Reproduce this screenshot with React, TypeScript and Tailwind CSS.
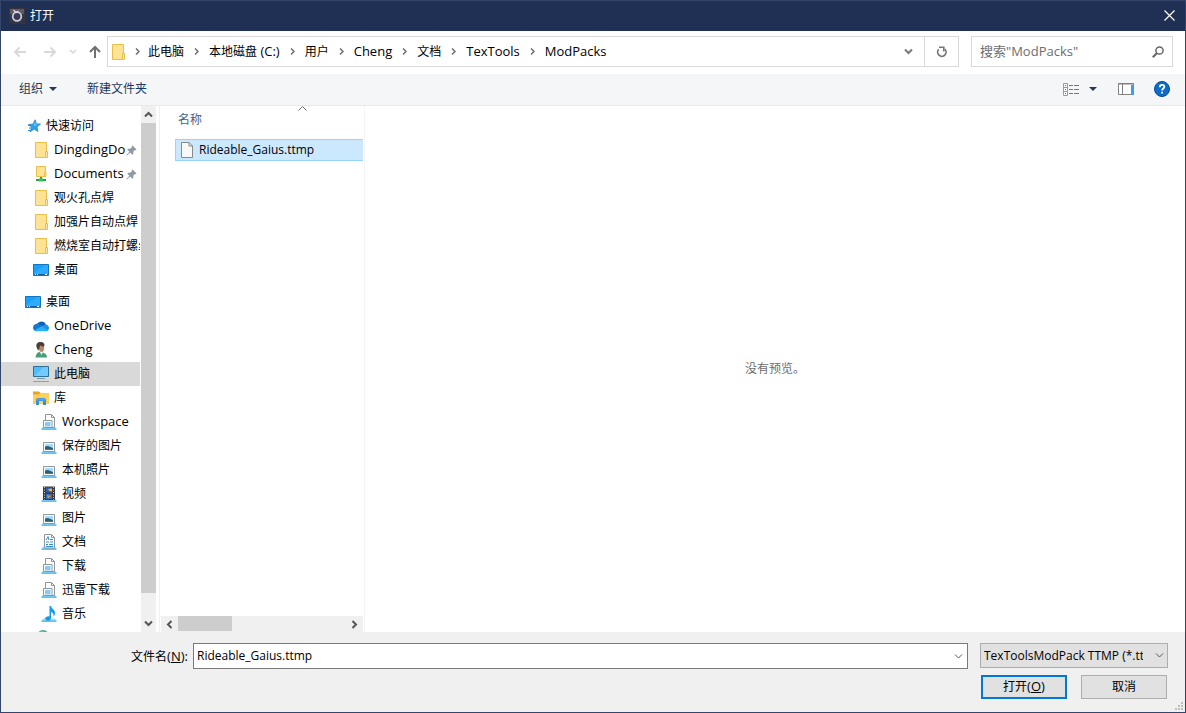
import { Fragment, useState } from 'react'
import type { ReactNode } from 'react'
import clsx from 'clsx'

type IconName =
  | 'star' | 'folder' | 'netFolder' | 'desktop' | 'cloud' | 'user' | 'pc'
  | 'library' | 'libDoc' | 'libPicture' | 'libVideo' | 'libText' | 'libMusic' | 'network'

type NavItem = { label: string; icon: IconName; level: number; pinned?: boolean; active?: boolean }

const quickAccess: NavItem[] = [
  { label: '快速访问', icon: 'star', level: 0 },
  { label: 'DingdingDo', icon: 'folder', level: 1, pinned: true },
  { label: 'Documents', icon: 'netFolder', level: 1, pinned: true },
  { label: '观火孔点焊', icon: 'folder', level: 1 },
  { label: '加强片自动点焊', icon: 'folder', level: 1 },
  { label: '燃烧室自动打螺丝', icon: 'folder', level: 1 },
  { label: '桌面', icon: 'desktop', level: 1 },
]

const desktopTree: NavItem[] = [
  { label: '桌面', icon: 'desktop', level: 0 },
  { label: 'OneDrive', icon: 'cloud', level: 1 },
  { label: 'Cheng', icon: 'user', level: 1 },
  { label: '此电脑', icon: 'pc', level: 1, active: true },
  { label: '库', icon: 'library', level: 1 },
  { label: 'Workspace', icon: 'libDoc', level: 2 },
  { label: '保存的图片', icon: 'libPicture', level: 2 },
  { label: '本机照片', icon: 'libPicture', level: 2 },
  { label: '视频', icon: 'libVideo', level: 2 },
  { label: '图片', icon: 'libPicture', level: 2 },
  { label: '文档', icon: 'libText', level: 2 },
  { label: '下载', icon: 'libDoc', level: 2 },
  { label: '迅雷下载', icon: 'libDoc', level: 2 },
  { label: '音乐', icon: 'libMusic', level: 2 },
  { label: '', icon: 'network', level: 1 },
]

const crumbs: ReactNode[] = [
  '此电脑',
  <>本地磁盘<span className="text-[13px]"> (C:)</span></>,
  '用户',
  <span className="text-[13px]">Cheng</span>,
  '文档',
  <span className="text-[13px]">TexTools</span>,
  <span className="text-[13px]">ModPacks</span>,
]

const indent = ['pl-6', 'pl-8', 'pl-10']

// Tray under every library icon
const Tray = () => (
  <>
    <path d="M2 12.5h12l1.5 2.5H.5z" fill="#a9dcf8" />
    <path d="M.5 14.500h15v1.300H.5z" fill="#3db2ee" />
  </>
)

const icons: Record<IconName, ReactNode> = {
  star: (
    <>
      <path d="M10.200 1.800l1.100 4 4.200.3-3.500 2.700.9 4.700-3.700-2.500-4 2.700 1.500-4.500-3.100-2.700 4.200-.3z" fill="#2aa3ec" stroke="#1278c4" strokeWidth=".7" />
      <path d="M3 7.500h3M4 10h2.500M3 12.500h2.500" stroke="#1e8fdc" strokeWidth="1" />
      <path d="M10 3.500l.8 3 2.700.3-4.500.9z" fill="#7fd0fb" />
    </>
  ),
  folder: (
    <>
      <path d="M2.500.500h11v15h-11z" fill="#ffe394" stroke="#e8bf4a" />
      <path d="M12.500 9.500h2v6h-2z" fill="#ffe9a8" stroke="#e8bf4a" />
    </>
  ),
  netFolder: (
    <>
      <path d="M3.500.500h9v10h-9z" fill="#ffe394" stroke="#e8bf4a" />
      <path d="M11.500 6.500h1.500v4h-1.500z" fill="#ffe9a8" stroke="#e8bf4a" />
      <path d="M7 11h2v2h4v2H3v-2h4z" fill="#27a345" />
      <path d="M6 12.500h4v3H6z" fill="#38c25a" />
    </>
  ),
  desktop: (
    <>
      <path d="M.5 2.500h15v11H.5z" fill="#18a0fb" stroke="#1373bd" />
      <path d="M1 11L12 3h3v9H1z" fill="#3fb3ff" opacity=".6" />
      <path d="M1.500 12.500h13" stroke="#0f62a6" />
      <path d="M2 12.500h1M4 12.500h1M12 12.500h2" stroke="#fff" />
    </>
  ),
  cloud: (
    <>
      <path d="M4 6a5 5 0 0 1 9 .5L8 11z" fill="#0f5fb8" />
      <path d="M3.600 5.800C1.500 6 0 7.600 0 9.600 0 11.800 1.600 13.300 3.600 13.300L10 8.500C8 6.500 6 5.500 3.600 5.800z" fill="#1377d1" />
      <path d="M12.600 6.500c2 0 3.400 1.600 3.400 3.500s-1.500 3.300-3.300 3.300L8 10c1-2.200 2.600-3.500 4.600-3.500z" fill="#1f93e4" />
      <path d="M1.300 12.300L8.600 8.300l6.200 4.100c-.6.6-1.300.9-2.200.9h-9c-1 0-1.700-.4-2.300-1z" fill="#2ab1f2" />
    </>
  ),
  user: (
    <>
      <path d="M2.500 15.500c0-2 1-4.500 3.500-5.500l3 .5c3 .5 5 2 5 5z" fill="#4a9a78" />
      <path d="M6.500 9.500h3l-.5 4z" fill="#eef3f0" />
      <ellipse cx="8.500" cy="6" rx="2.600" ry="4" fill="#b98865" />
      <path d="M3.500 5C2.800 2 4.500 0 7.500 0s4.600 1.700 3.700 4.500C9.500 4.500 8 4 7 3.500 6.700 6 6 7.500 5 8.500z" fill="#4b4038" />
    </>
  ),
  pc: (
    <>
      <path d="M.5.500h15v10H.5z" fill="#4fbcf8" stroke="#2b7199" />
      <path d="M1 10L11 1h4v9z" fill="#8bd6fc" opacity=".6" />
      <path d="M4 12.500h8" stroke="#7d96a6" strokeWidth="1" />
      <path d="M0 15.500h16" stroke="#86a4b8" strokeWidth="1" />
    </>
  ),
  library: (
    <>
      <path d="M0 1.500h6L7.500 3H16v11H0z" fill="#e5a525" />
      <path d="M0 4.500h6l1-1.500h9v11H0z" fill="#ffd058" />
      <path d="M3 15V9.500L4.500 8h7L13 9.500V15h-3v-4H6v4z" fill="#3b8fd8" />
      <path d="M4 8.500h8v2H4z" fill="#4da9f0" />
    </>
  ),
  libDoc: (
    <>
      <Tray />
      <path d="M4.500.500h6l3 3v10h-9z" fill="#fbfbfb" stroke="#8d969c" />
      <path d="M10.500.500v3h3" fill="none" stroke="#8d969c" />
      <path d="M2.500 6.500h8.500v7H2.500z" fill="#fff" stroke="#8d969c" />
      <path d="M4 8h5.500v4.500H4z" fill="#8ac9f5" />
    </>
  ),
  libPicture: (
    <>
      <Tray />
      <path d="M2.500 4.500h11v9h-11z" fill="#fff" stroke="#8d969c" />
      <path d="M4 6h8v6H4z" fill="#a9d9f8" />
      <path d="M4 8.500l3-.5 5 2v1H4z" fill="#2c6172" />
      <path d="M4 11h8v1H4z" fill="#3975b8" />
    </>
  ),
  libVideo: (
    <>
      <Tray />
      <path d="M2 .500h12v13.500H2z" fill="#3b3b3e" />
      <path d="M5 1.500h6v5H5z" fill="#315ea8" />
      <path d="M5 8h6v5H5z" fill="#2e6fc0" />
      <path d="M7 3l4-.5v3L8.500 5z" fill="#f1b53a" />
      <path d="M6 9l4 1-3 2.500z" fill="#e0913a" />
      <path d="M9 8h2v2z" fill="#d5432f" />
      <path d="M3.500 1v13M12.500 1v13" stroke="#c9c9c9" strokeDasharray="1 1.500" />
    </>
  ),
  libText: (
    <>
      <Tray />
      <path d="M3.500.500h7l3 3v10.500h-10z" fill="#fff" stroke="#8d969c" />
      <path d="M10.500.500v3h3" fill="none" stroke="#8d969c" />
      <path d="M5 6l2-3.500L8 6M9 5.500h3M5 8h3M9 8h3M5 10.500h2M8 10.500h4M5 12.500h7" stroke="#2f91d2" fill="none" />
    </>
  ),
  libMusic: (
    <>
      <Tray />
      <path d="M8.500 0H10c.4 2.500 4 3.500 4 7 0 1.500-.6 2.600-1.600 3.500.7-2.500-.6-4-2.400-4.500v6c0 1.700-1.300 2.700-3 2.700s-2.800-.9-2.800-2.200c0-1.500 1.700-2.500 4.300-2.200z" fill="#1a9be6" />
    </>
  ),
  network: (
    <>
      <circle cx="10" cy="6" r="6" fill="#4aa7a2" />
      <path d="M5 4l3-3.500 3 1-3 3z" fill="#57bdf0" />
    </>
  ),
}

const Icon = ({ name }: { name: IconName }) => (
  <svg viewBox="0 0 16 16" className="h-4 w-4 shrink-0" aria-hidden="true">{icons[name]}</svg>
)

const Caret = ({ className }: { className?: string }) => (
  <svg viewBox="0 0 8 4" className={clsx('h-1 w-2', className)} aria-hidden="true">
    <path d="M0 0h8L4 4z" fill="#1e395b" />
  </svg>
)

const chevronPaths = {
  up: 'M1 6.500L4.500 3 8 6.500',
  down: 'M1 2.500L4.500 6 8 2.500',
  left: 'M6.500 1L3 4.500 6.500 8',
  right: 'M2.500 1L6 4.500 2.500 8',
}

const Chevron = ({ dir, color = '#555', width = 2 }: { dir: keyof typeof chevronPaths; color?: string; width?: number }) => (
  <svg viewBox="0 0 9 9" className="h-[9px] w-[9px]" aria-hidden="true">
    <path d={chevronPaths[dir]} fill="none" stroke={color} strokeWidth={width} />
  </svg>
)

const Pin = () => (
  <svg viewBox="0 0 11 11" className="h-[11px] w-[11px] shrink-0" aria-hidden="true">
    <path d="M6.500.5l4 4-.8.8-.8-.2-1.700 1.700.2 2-1 .9-2.300-2.300L1 10.500l-.6-.5 3-3.200L1.300 4.600l.9-.9 2 .1L6 2.100l-.2-.8z" fill="#8d9aa6" />
  </svg>
)

const NavRow = ({ item }: { item: NavItem }) => (
  <li>
    <a
      href="#"
      className={clsx(
        'flex h-6 items-center whitespace-nowrap',
        indent[item.level],
        /[a-z]/i.test(item.label) ? 'text-[13px]' : 'text-xs',
        item.active ? 'bg-[#d9d9d9]' : 'hover:bg-[#e5f3ff]'
      )}
    >
      <Icon name={item.icon} />
      <span className="ml-[5px] w-[72px] flex-none">{item.label}</span>
      {item.pinned && <Pin />}
    </a>
  </li>
)

export default function App() {
  const [fileName, setFileName] = useState('Rideable_Gaius.ttmp')

  return (
    <div className="flex h-screen flex-col overflow-hidden border border-[#34456c] bg-white font-['Open_Sans','Noto_Sans_CJK_SC',sans-serif] text-xs text-black">
      {/* Title bar */}
      <header className="flex h-[30px] shrink-0 items-center bg-[#1f3054] pl-2">
        <svg viewBox="0 0 16 16" className="h-4 w-4" aria-hidden="true">
          <rect width="16" height="16" rx="1.500" fill="#37353a" />
          <path d="M1 1h14v5H1z" fill="#5d5a5c" />
          <circle cx="8" cy="8.500" r="4.300" fill="#3c3a4c" stroke="#c3cbf0" strokeWidth="1.800" />
          <path d="M4.500 2l2.500 2.500L9.500 3" stroke="#e9d9e0" strokeWidth="1.200" fill="none" />
        </svg>
        <h1 className="ml-[5px] flex-1 text-white">打开</h1>
        <button aria-label="关闭" className="flex h-full w-8 items-center justify-center pb-px">
          <svg viewBox="0 0 11 11" className="h-[11px] w-[11px]" aria-hidden="true">
            <path d="M.5.5l10 10M10.500.5l-10 10" stroke="#fff" strokeWidth="1.200" />
          </svg>
        </button>
      </header>

      {/* Address row */}
      <div className="flex h-[43px] shrink-0 items-center pb-0.5 pr-3">
        <div className="flex w-[106px] shrink-0 items-center pl-3">
          <button aria-label="后退" className="w-[30px]">
            <svg viewBox="0 0 14 12" className="h-3 w-[14px]" aria-hidden="true">
              <path d="M13 6H2M6.500 1.500L2 6l4.500 4.500" fill="none" stroke="#d9d9d9" strokeWidth="2" />
            </svg>
          </button>
          <button aria-label="前进" className="w-[26px]">
            <svg viewBox="0 0 14 12" className="h-3 w-[14px]" aria-hidden="true">
              <path d="M1 6h11M7.500 1.500L12 6l-4.500 4.500" fill="none" stroke="#d9d9d9" strokeWidth="2" />
            </svg>
          </button>
          <button aria-label="最近浏览的位置" className="flex w-5">
            <svg viewBox="0 0 8 6" className="h-[6px] w-2" aria-hidden="true">
              <path d="M1 1l3 3 3-3" fill="none" stroke="#d4d4d4" strokeWidth="1.500" />
            </svg>
          </button>
          <button aria-label="上移">
            <svg viewBox="0 0 12 14" className="h-[14px] w-3" aria-hidden="true">
              <path d="M6 13V2M1 7l5-5 5 5" fill="none" stroke="#707070" strokeWidth="2" />
            </svg>
          </button>
        </div>

        <div className="flex h-[31px] min-w-0 flex-1 border border-[#d9d9d9]">
          <nav className="flex min-w-0 flex-1 items-center overflow-hidden whitespace-nowrap pl-0.5">
            <Icon name="folder" />
            {crumbs.map((crumb, i) => (
              <Fragment key={i}>
                <span className={clsx('flex shrink-0 justify-center', i === 0 ? 'w-[22px]' : 'w-[25px]')}>
                  <svg viewBox="0 0 5 7" className="h-[7px] w-[5px]" aria-hidden="true">
                    <path d="M1 .5l3 3-3 3" fill="none" stroke="#6e6e6e" strokeWidth="1.500" />
                  </svg>
                </span>
                <a href="#" className="whitespace-pre leading-5">{crumb}</a>
              </Fragment>
            ))}
          </nav>
          <button aria-label="以前的位置" className="flex w-8 items-center justify-center">
            <Chevron dir="down" color="#777" />
          </button>
          <button aria-label="刷新" className="flex w-[34px] items-center justify-center border-l border-[#d9d9d9]">
            <svg viewBox="0 0 12 12" className="h-3 w-3" aria-hidden="true">
              <path d="M2.700 3.300A4.200 4.200 0 1 0 8.700 3" fill="none" stroke="#777" strokeWidth="1.700" />
              <path d="M3 1.200h4.800V5.500" fill="none" stroke="#777" strokeWidth="1.600" />
            </svg>
          </button>
        </div>

        <label className="ml-3 flex h-[31px] w-[202px] shrink-0 items-center border border-[#d9d9d9] pl-2 pr-2">
          <input
            type="text"
            aria-label={'搜索"ModPacks"'}
            placeholder={'搜索"ModPacks"'}
            className="min-w-0 flex-1 text-[13px] outline-none placeholder:text-[#6d6d6d]"
          />
          <svg viewBox="0 0 12 12" className="h-3 w-3" aria-hidden="true">
            <circle cx="7.500" cy="4.500" r="3.600" fill="none" stroke="#666" strokeWidth="1.500" />
            <path d="M5 7L.8 11.200" stroke="#666" strokeWidth="2" />
          </svg>
        </label>
      </div>

      {/* Command bar */}
      <div className="flex h-8 shrink-0 items-center border-b border-[#e8e9ea] bg-[#f5f6f7] pb-px pl-[18px] pr-[15px] text-[#1e395b]">
        <button className="flex items-center">
          组织
          <Caret className="ml-1.5" />
        </button>
        <button className="ml-[30px]">新建文件夹</button>
        <button aria-label="更改视图" className="ml-auto flex items-center">
          <svg viewBox="0 0 16 13" className="h-[13px] w-4" aria-hidden="true">
            <path d="M.5.500h4v12h-4zM.5 4.500h4M.5 8.500h4" fill="#fff" stroke="#9b9b9b" />
            <path d="M2 2.500h1M2 6.500h1" stroke="#2f78c4" />
            <path d="M2 10.500h1" stroke="#d0342c" />
            <path d="M6 2.500h4M11 2.500h5M6 6.500h4M11 6.500h5M6 10.500h4M11 10.500h5" stroke="#777" />
          </svg>
          <Caret className="ml-2.5" />
        </button>
        <button aria-label="预览窗格" className="ml-[21px]">
          <svg viewBox="0 0 16 12" className="h-3 w-4" aria-hidden="true">
            <path d="M.5.500h15v11H.5z" fill="#fff" stroke="#808080" />
            <path d="M0 1h16M4.500 1v10" stroke="#808080" />
            <path d="M13 2h3v10h-3z" fill="#3e9be9" />
          </svg>
        </button>
        <button aria-label="获取帮助" className="ml-5">
          <svg viewBox="0 0 16 16" className="h-4 w-4" aria-hidden="true">
            <circle cx="8" cy="8" r="7.500" fill="#0b6ccc" stroke="#0a4a92" />
            <path d="M5.800 6.200c0-1.500 1-2.300 2.300-2.300s2.200.8 2.200 2c0 1.500-2.200 1.700-2.200 3.600" fill="none" stroke="#fff" strokeWidth="1.800" />
            <path d="M7.200 10.800H9v1.800H7.200z" fill="#fff" />
          </svg>
        </button>
      </div>

      {/* Tree, file list and preview */}
      <main className="flex min-h-0 flex-1">
        <aside className="flex w-[159px] shrink-0 border-r border-[#f0f0f0]">
          <nav className="w-[139px] overflow-hidden pt-2">
            <ul>{quickAccess.map((item, i) => <NavRow key={i} item={item} />)}</ul>
            <ul className="mt-2">{desktopTree.map((item, i) => <NavRow key={i} item={item} />)}</ul>
          </nav>
          <div className="ml-px flex w-[15px] flex-col bg-[#f0f0f0]">
            <button aria-label="向上滚动" className="flex h-[17px] items-center justify-center"><Chevron dir="up" /></button>
            <div className="grow-[470] bg-[#cdcdcd]" />
            <div className="grow-[22]" />
            <button aria-label="向下滚动" className="flex h-[17px] items-center justify-center"><Chevron dir="down" /></button>
          </div>
        </aside>

        <section className="flex w-[205px] shrink-0 flex-col border-r border-[#f5f5f5] pl-px">
          <button className="relative h-[33px] pl-[17px] pb-1.5 text-left text-[#4c607a]">
            名称
            <svg viewBox="0 0 9 5" className="absolute left-[137px] top-0 h-[5px] w-[9px]" aria-hidden="true">
              <path d="M.5 4.500l4-4 4 4" fill="none" stroke="#666" />
            </svg>
          </button>
          <ul className="min-h-0 flex-1 pl-3.5">
            <li className="mr-px flex h-[22px] items-center border border-r-0 border-[#99d1ff] bg-[#cce8ff] pl-[5px]">
              <svg viewBox="0 0 12 16" className="h-4 w-3" aria-hidden="true">
                <path d="M.5.500h7.500l3.500 3.500v11.500H.5z" fill="#f8f8f8" stroke="#8a8a8a" />
                <path d="M8 .500v3.500h3.500" fill="none" stroke="#8a8a8a" />
              </svg>
              <span className="ml-1.5">Rideable_Gaius.ttmp</span>
            </li>
          </ul>
          <div className="mr-px flex h-4 bg-[#f0f0f0]">
            <button aria-label="向左滚动" className="flex w-[17px] items-center justify-center"><Chevron dir="left" /></button>
            <div className="mb-px w-[54px] bg-[#cdcdcd]" />
            <div className="flex-1" />
            <button aria-label="向右滚动" className="flex w-[17px] items-center justify-center"><Chevron dir="right" /></button>
          </div>
        </section>

        <section className="flex flex-1 items-center justify-center text-[#6d6d6d]">
          没有预览。
        </section>
      </main>

      {/* File name and buttons */}
      <footer className="relative flex h-20 shrink-0 flex-col bg-[#f0f0f0] pr-[17px] pt-[11px]">
        <div className="flex items-start">
          <label htmlFor="file-name" className="w-48 pr-[5px] text-right leading-[26px]">
            文件名<span className="text-[13px]">(<u>N</u>):</span>
          </label>
          <div className="flex h-[26px] min-w-0 flex-1 border border-[#7a7a7a] bg-white">
            <input
              id="file-name"
              type="text"
              value={fileName}
              onChange={(e) => setFileName(e.target.value)}
              className="min-w-0 flex-1 pl-[3px] outline-none"
            />
            <button aria-label="文件名列表" className="flex w-[17px] items-center justify-center">
              <Chevron dir="down" width={1} />
            </button>
          </div>
          <div className="relative ml-3 w-[188px] shrink-0">
            <select
              aria-label="文件类型"
              className="h-[25px] w-full appearance-none border border-[#adadad] bg-[#e1e1e1] pl-[3px] pr-6 outline-none"
            >
              <option>TexToolsModPack TTMP (*.ttmp)</option>
            </select>
            <span className="pointer-events-none absolute right-1 top-2">
              <Chevron dir="down" width={1} />
            </span>
          </div>
        </div>
        <div className="mt-[5px] flex justify-end gap-3.5 pr-px">
          <button className="h-6 w-[86px] border-2 border-[#0078d7] bg-[#e1e1e1]">
            打开<span className="text-[13px]">(<u>O</u>)</span>
          </button>
          <button className="h-6 w-[86px] border border-[#adadad] bg-[#e1e1e1]">取消</button>
        </div>
        <svg viewBox="0 0 8 8" className="absolute bottom-0.5 right-0.5 h-2 w-2" aria-hidden="true">
          <path d="M6 0h2v2H6zM3 3h2v2H3zM6 3h2v2H6zM0 6h2v2H0zM3 6h2v2H3zM6 6h2v2H6z" fill="#bfbfbf" />
        </svg>
      </footer>
    </div>
  )
}
